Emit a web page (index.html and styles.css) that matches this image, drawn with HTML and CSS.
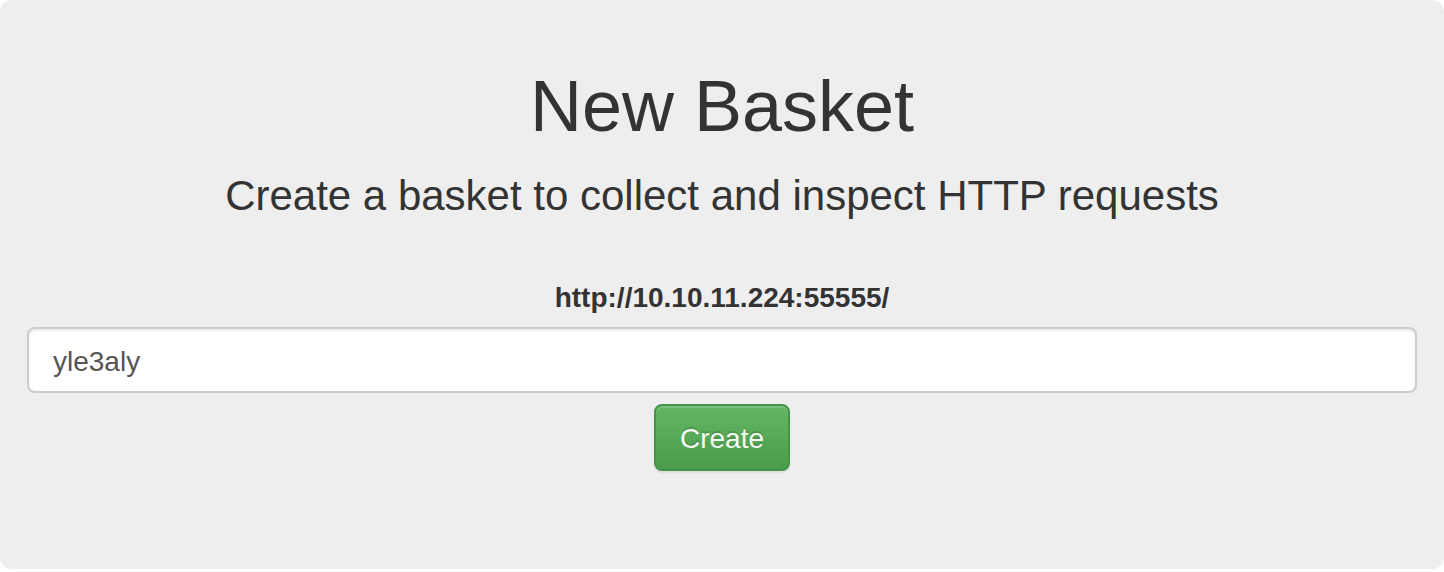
FILE: index.html
```html
<!DOCTYPE html>
<html lang="en">
<head>
<meta charset="utf-8">
<title>New Basket</title>
<link rel="stylesheet" href="styles.css">
</head>
<body>
<div class="jumbotron">
  <h1 class="title">New Basket</h1>
  <p class="lead">Create a basket to collect and inspect HTTP requests</p>
  <form class="basket-form">
    <div class="form-group">
      <label class="form-label" for="basket_name">http://10.10.11.224:55555/</label>
      <input id="basket_name" class="form-control" type="text" value="yle3aly">
    </div>
    <button type="button" class="btn-success">Create</button>
  </form>
</div>
</body>
</html>
```
FILE: styles.css
```css
html, body {
  margin: 0;
  padding: 0;
  background: #fff;
}

body {
  font-family: "Liberation Sans", Arial, Helvetica, sans-serif;
  color: #333;
}

.jumbotron {
  background: #eee;
  border-radius: 12px;
  padding: 67px 0 60px;
  text-align: center;
}

.title {
  margin: 0 0 20px;
  font-size: 72px;
  line-height: 79px;
  font-weight: normal;
}

.lead {
  margin: 0 0 30px;
  font-size: 42px;
  line-height: 60px;
}

.basket-form {
  margin: 0 0 16px;
  padding: 20px 27px;
  border-top: 2px solid transparent;
  border-bottom: 2px solid transparent;
  box-shadow: inset 0 2px 0 rgba(255, 255, 255, 0.22), 0 2px 0 rgba(255, 255, 255, 0.22);
}

.form-group {
  margin-bottom: 11px;
}

.form-label {
  display: inline-block;
  margin-bottom: 9px;
  font-size: 28px;
  line-height: 40px;
  font-weight: bold;
}

.form-control {
  display: block;
  box-sizing: border-box;
  width: 100%;
  height: 66px;
  margin: 0;
  padding: 14px 24px 10px;
  font-family: "Liberation Sans", Arial, Helvetica, sans-serif;
  font-size: 28px;
  line-height: 38px;
  color: #555;
  background: #fff;
  border: 2px solid #ccc;
  border-radius: 8px;
  box-shadow: inset 0 2px 2px rgba(0, 0, 0, 0.075);
  outline: none;
}

.btn-success {
  display: inline-block;
  margin: 0;
  padding: 13px 24px 10px;
  font-family: "Liberation Sans", Arial, Helvetica, sans-serif;
  font-size: 28px;
  line-height: 40px;
  color: #f4f9f4;
  background-color: #5cb85c;
  background-image: linear-gradient(to bottom, #64b664 0, #4a9c4a 100%);
  border: 2px solid #43934a;
  border-radius: 8px;
  text-shadow: 0 -2px 0 rgba(0, 0, 0, 0.15);
  box-shadow: inset 0 2px 0 rgba(255, 255, 255, 0.15), 0 2px 2px rgba(0, 0, 0, 0.075);
  cursor: pointer;
}
```
